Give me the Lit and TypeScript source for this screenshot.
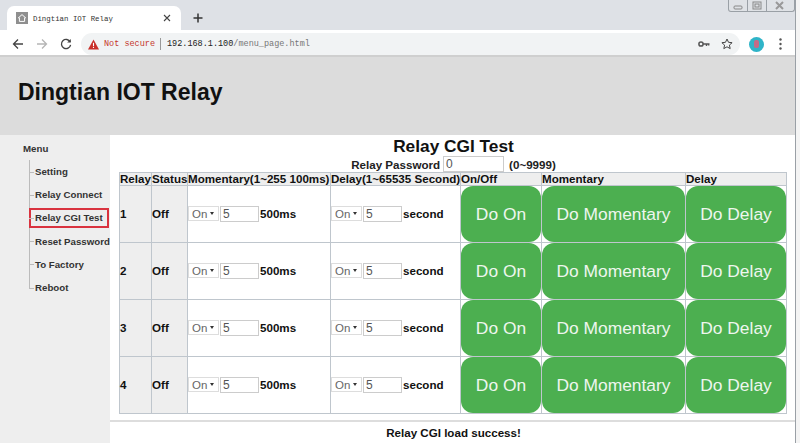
import { LitElement, html, css } from "lit";
import { customElement } from "lit/decorators.js";

const MENU = ["Setting", "Relay Connect", "Relay CGI Test", "Reset Password", "To Factory", "Reboot"];

@customElement("app-root")
export class AppRoot extends LitElement {
  static styles = css`
    :host { display: block; width: 800px; height: 443px; overflow: hidden; position: relative; font-family: "Liberation Sans", Arial, sans-serif; background: #fff; }
    * { box-sizing: border-box; }
    .browser { display: flex; flex-direction: column; height: 443px; }
    .tabstrip { height: 30px; flex: none; background: #dee1e6; padding: 6px 0 0 7px; display: flex; align-items: center; }
    .tab { width: 174px; height: 24px; background: #fff; border-radius: 7px 7px 0 0; display: flex; align-items: center; padding: 0 10px 0 9px; }
    .favicon { width: 12px; height: 12px; flex: none; margin-right: 5px; }
    .tabtitle { flex: 1; font: 7.4px "Liberation Mono", monospace; color: #333; white-space: nowrap; padding-top: 1px; }
    .close { width: 8px; height: 8px; flex: none; }
    .plus { width: 10px; height: 10px; margin: 0 0 0 12px; flex: none; }
    .toolbar { height: 27px; flex: none; background: #fff; display: flex; align-items: center; padding: 3px 0 0 12px; border-bottom: 2px solid #cfcfcf; }
    .navicon { width: 12px; height: 12px; flex: none; margin-right: 12px; }
    .omnibox { margin-left: -3px; width: 659px; height: 22px; flex: none; background: #f1f3f4; border-radius: 11px; display: flex; align-items: center; padding: 0 7px 0 7px; font: 8.5px "Liberation Mono", monospace; }
    .warn { width: 11px; height: 11px; margin-right: 5px; flex: none; }
    .notsecure { color: #c5352b; }
    .sep { width: 1px; height: 12px; background: #999; margin: 0 6px 0 5px; flex: none; }
    .host { color: #222; }
    .path { color: #777; flex: 1; }
    .key { width: 12px; height: 12px; flex: none; }
    .star { width: 12px; height: 12px; flex: none; margin-left: 11px; }
    .avatar { width: 15px; height: 15px; border-radius: 50%; background: #2fb4c8; margin-left: 9px; flex: none; display: flex; align-items: center; justify-content: center; }
    .avatar i { width: 5px; height: 8px; border-radius: 2px; background: #c56a86; display: block; }
    .dots { width: 3px; height: 12px; margin-left: 15px; flex: none; }
    .page { flex: 1; display: flex; flex-direction: column; min-height: 0; }
    header { height: 78px; flex: none; background: #dcdcdc; display: flex; align-items: center; padding: 0 0 8px 18px; }
    h1 { margin: 0; font-size: 23px; font-weight: bold; color: #111; line-height: 1; }
    .body { flex: 1; display: flex; min-height: 0; }
    nav { width: 110px; flex: none; background: #eeeeee; padding: 7px 0 0 0; color: #333; font-size: 9.7px; font-weight: bold; }
    .menu-title { padding-left: 23px; height: 14px; line-height: 14px; margin-bottom: 4px; }
    ul { list-style: none; margin: 0; padding: 0 0 0 29px; }
    li { height: 23.2px; display: flex; align-items: center; padding-left: 6px; position: relative; white-space: nowrap; }
    li::before { content: ""; position: absolute; left: 0; top: 0; bottom: 0; width: 0; border-left: 1px solid #bbb; }
    li:last-child::before { bottom: 50%; }
    li::after { content: ""; position: absolute; left: 0; top: 50%; width: 5px; border-top: 1px solid #bbb; }
    li.active span.box { position: absolute; left: 0; top: 2px; width: 80px; height: 19.5px; border: 2px solid #d9333f; }
    main { flex: 1; min-width: 0; display: flex; flex-direction: column; padding: 0 3px 0 0; background: #fff; }
    .content { flex: none; display: flex; flex-direction: column; align-items: center; }
    h2 { margin: 2px 0 0; font-size: 17.3px; font-weight: bold; color: #111; line-height: 18px; }
    .pw { height: 16px; display: flex; align-items: center; font-size: 11.6px; font-weight: bold; color: #222; margin-top: 1px; }
    .pw input { width: 61px; margin: 0 5px 0 3px; }
    input { height: 16px; border: 1px solid #ccc; padding: 0 2px; font: 12px "Liberation Sans", sans-serif; color: #555; background: #fff; outline: none; }
    .sel { position: relative; display: block; flex: none; width: 31px; height: 15px; }
    .sel::after { content: ""; position: absolute; right: 5px; top: 6px; border: 2.5px solid transparent; border-top: 3px solid #333; border-bottom: 0; pointer-events: none; }
    select { appearance: none; display: block; height: 15px; width: 31px; border: 1px solid #ddd; border-radius: 0; padding: 0 0 0 3px; font: 11.5px "Liberation Sans", sans-serif; color: #666; background: #fff; outline: none; }
    table { border-collapse: collapse; table-layout: fixed; width: 667px; margin-left: 9px; align-self: flex-start; font-size: 11.6px; font-weight: bold; color: #111; }
    th, td { border: 1px solid #bfc6cd; padding: 0; text-align: left; white-space: nowrap; }
    th { background: #eeeeee; height: 13px; line-height: 11px; font-weight: bold; padding-bottom: 1px; }
    td { height: 57px; padding-bottom: 1px; }
    td.act { padding: 0; }
    td.shade { background: #eeeeee; }
    .ctl { display: flex; align-items: center; }
    .ctl input { width: 39px; margin: 0 1px; }
    .c1 { width: 32px; } .c2 { width: 36px; } .c3 { width: 143px; } .c4 { width: 130px; } .c5 { width: 81px; } .c6 { width: 144px; } .c7 { width: 101px; }
    button { display: block; width: 100%; height: 56px; background: #4caf50; color: #eef6ee; border: 0; border-radius: 12px; font: 17.4px "Liberation Sans", sans-serif; padding: 0; }
    .status { margin-top: 6px; border-top: 2px solid #ddd; height: 23px; display: flex; align-items: center; justify-content: center; font-size: 11.6px; font-weight: bold; color: #111; }
    .edge { position: absolute; right: 4px; top: 0; bottom: 0; width: 1px; background: #9aa0a6; }
    .edgefill { position: absolute; right: 0; top: 0; bottom: 0; width: 4px; background: #f4f4f4; }
    .winbtns { position: absolute; right: 5px; top: 0; width: 67px; height: 12px; display: flex; border: 1px solid #9aa0a6; border-top: 0; border-radius: 0 0 3px 3px; background: #dfe2e6; }
    .winbtns svg { flex: 1; height: 11px; border-right: 1px solid #9aa0a6; }
    .winbtns svg:last-child { border-right: 0; flex: 1.5; }
  `;

  private rowTpl(n: number) {
    return html`<tr>
      <td class="shade">${n}</td>
      <td class="shade">Off</td>
      <td><div class="ctl"><span class="sel"><select><option>On</option></select></span><input value="5" />500ms</div></td>
      <td><div class="ctl"><span class="sel"><select><option>On</option></select></span><input value="5" />second</div></td>
      <td class="act"><button>Do On</button></td>
      <td class="act"><button>Do Momentary</button></td>
      <td class="act"><button>Do Delay</button></td>
    </tr>`;
  }

  render() {
    return html`<div class="browser">
      <div class="tabstrip">
        <div class="tab">
          <svg class="favicon" viewBox="0 0 12 12"><rect width="12" height="12" fill="#8f8f8f"/><path d="M2 6.2 6 2.6l4 3.6M3.4 5.6v3.8h5.2V5.6" fill="none" stroke="#fff" stroke-width="1"/></svg>
          <span class="tabtitle">Dingtian IOT Relay</span>
          <svg class="close" viewBox="0 0 8 8"><path d="M1 1l6 6M7 1 1 7" stroke="#444" stroke-width="1.1"/></svg>
        </div>
        <svg class="plus" viewBox="0 0 10 10"><path d="M5 .5v9M.5 5h9" stroke="#333" stroke-width="1.5"/></svg>
      </div>
      <div class="toolbar">
        <svg class="navicon" viewBox="0 0 12 12"><path d="M11 6H1.5M6 1.5 1.5 6 6 10.5" fill="none" stroke="#444" stroke-width="1.3"/></svg>
        <svg class="navicon" viewBox="0 0 12 12"><path d="M1 6h9.5M6 1.5 10.5 6 6 10.5" fill="none" stroke="#b5b5b5" stroke-width="1.3"/></svg>
        <svg class="navicon" viewBox="0 0 12 12"><path d="M10.2 4A4.6 4.6 0 1 0 10.6 6.8" fill="none" stroke="#444" stroke-width="1.3"/><path d="M10.8 1v3.6H7.2z" fill="#444"/></svg>
        <div class="omnibox">
          <svg class="warn" viewBox="0 0 12 11"><path d="M6 0 12 11H0z" fill="#c9302a"/><path d="M6 3.6v3.8M6 8.2v1.2" stroke="#fff" stroke-width="1.2"/></svg>
          <span class="notsecure">Not secure</span><span class="sep"></span><span class="host">192.168.1.100</span><span class="path">/menu_page.html</span>
          <svg class="key" viewBox="0 0 12 12"><circle cx="3" cy="6" r="2.1" fill="none" stroke="#555" stroke-width="1.5"/><path d="M5 6h6.5M8.5 6v2M10.7 6v1.6" stroke="#555" stroke-width="1.4" fill="none"/></svg>
          <svg class="star" viewBox="0 0 12 12"><path d="M6 1l1.5 3.3 3.6.4-2.7 2.4.8 3.5L6 8.8l-3.2 1.8.8-3.5L.9 4.7l3.6-.4z" fill="none" stroke="#444" stroke-width="1"/></svg>
        </div>
        <div class="avatar"><i></i></div>
        <svg class="dots" viewBox="0 0 3 12"><circle cx="1.5" cy="1.5" r="1.2" fill="#555"/><circle cx="1.5" cy="6" r="1.2" fill="#555"/><circle cx="1.5" cy="10.5" r="1.2" fill="#555"/></svg>
      </div>
      <div class="page">
        <header><h1>Dingtian IOT Relay</h1></header>
        <div class="body">
          <nav>
            <div class="menu-title">Menu</div>
            <ul>
              ${MENU.map((m) => html`<li class=${m === "Relay CGI Test" ? "active" : ""}>${m === "Relay CGI Test" ? html`<span class="box"></span>` : ""}<span>${m}</span></li>`)}
            </ul>
          </nav>
          <main>
            <div class="content">
              <h2>Relay CGI Test</h2>
              <div class="pw">Relay Password <input value="0" /> (0~9999)</div>
              <table>
                <colgroup><col class="c1"/><col class="c2"/><col class="c3"/><col class="c4"/><col class="c5"/><col class="c6"/><col class="c7"/></colgroup>
                <thead><tr><th>Relay</th><th>Status</th><th>Momentary(1~255 100ms)</th><th>Delay(1~65535 Second)</th><th>On/Off</th><th>Momentary</th><th>Delay</th></tr></thead>
                <tbody>${[1, 2, 3, 4].map((n) => this.rowTpl(n))}</tbody>
              </table>
            </div>
            <div class="status">Relay CGI load success!</div>
          </main>
        </div>
      </div>
    </div>
    <div class="edgefill"></div>
    <div class="edge"></div>
    <div class="winbtns">
      <svg viewBox="0 0 18 11"><rect x="5" y="6" width="8" height="3" rx="1" fill="none" stroke="#888"/></svg>
      <svg viewBox="0 0 18 11"><rect x="5" y="2" width="8" height="7" fill="none" stroke="#888"/><rect x="7" y="4" width="4" height="3" fill="none" stroke="#888"/></svg>
      <svg viewBox="0 0 27 11"><path d="M9 2l7 7M16 2 9 9" stroke="#999" stroke-width="2" fill="none"/></svg>
    </div>`;
  }
}
